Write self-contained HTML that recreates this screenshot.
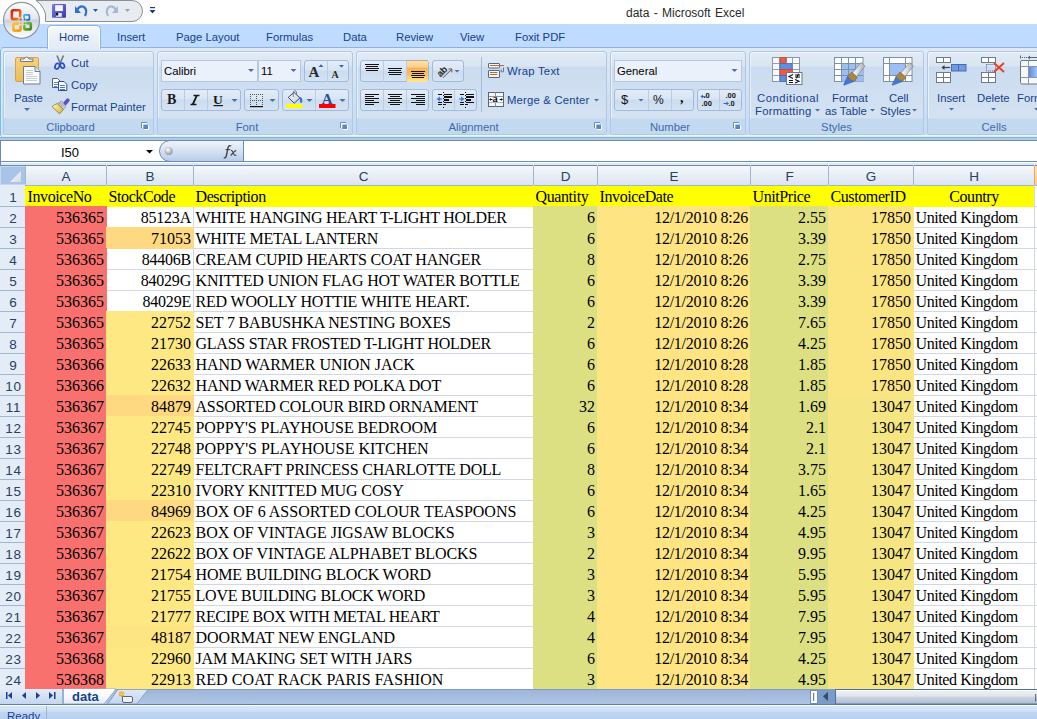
<!DOCTYPE html>
<html><head><meta charset="utf-8">
<style>
*{box-sizing:border-box;margin:0;padding:0}
html,body{width:1037px;height:719px;overflow:hidden;background:#fff;font-family:"Liberation Sans",sans-serif;position:relative}
.a{position:absolute}
/* title */
#title{left:0;top:0;width:1037px;height:24px;background:#fff}
#ttext{left:626px;top:6px;font-size:12px;color:#2a2a2a;white-space:nowrap;word-spacing:1px}
#tabs{left:0;top:24px;width:1037px;height:24px;background:#bfdbff}
.tab{position:absolute;z-index:3;top:31px;font-size:11.3px;color:#15428b;white-space:nowrap}
#hometab{left:47px;top:25px;width:54px;height:24px;border:1px solid #8db2e3;border-bottom:none;border-radius:5px 5px 0 0;background:linear-gradient(#f7fafd,#e9f0f9 50%,#e1eaf6);z-index:2;box-shadow:inset 1px 1px 0 #fff,inset -1px 0 0 #fff}
/* ribbon */
#ribbon{left:0;top:47px;width:1037px;height:90px;background:linear-gradient(#dfe9f5,#c4daf3);border-top:1px solid #8db2e3;border-left:1px solid #8db0e0;border-radius:4px 0 0 3px;box-shadow:inset 1px -1px 0 #bff6fb,inset 0 -2px 0 #e8f6fa}
.grp{position:absolute;top:51px;height:84px;border:1px solid #afc8e6;border-radius:3px;background:linear-gradient(#e2ebf6 0px,#d9e5f3 14px,#cbdcf0 15px,#d4e2f2 66px);overflow:hidden;box-shadow:inset 1px 1px 0 rgba(255,255,255,.5)}
.glab{position:absolute;left:0;right:0;bottom:0;height:16px;background:#c2d9f0;border-top:1px solid #c9dcf2;font-size:11.3px;color:#3e6aaa;text-align:center;line-height:17px;white-space:nowrap;padding-right:16px}
.glab.nl{padding-right:0}
.lt{position:absolute;font-size:11.3px;color:#15428b;white-space:nowrap;line-height:14px}
.btng{position:absolute;height:21px;border:1px solid #9fbbdd;border-radius:3px;background:linear-gradient(#e3ecf7 0%,#d9e5f4 45%,#cbdcf0 50%,#d5e3f3 100%)}
.sep{position:absolute;top:0;bottom:0;width:1px;background:#b9cde5}
.combo{position:absolute;height:22px;border:1px solid #b4c8e1;background:#eaf1fa}
.dd{position:absolute;width:0;height:0;border-left:3px solid transparent;border-right:3px solid transparent;border-top:3px solid #4c6ea0}
.launch{position:absolute;width:7px;height:7px;border:1px solid #6b8fbf;border-radius:1px}
/* formula bar */
#fbar{left:0;top:137px;width:1037px;height:29px;background:linear-gradient(#b4c9e8 0,#b4c9e8 2px,#ffffff 2px,#ffffff 25px,#dde8f5 25px);border-top:1px solid #98aac4}
#namebox{left:0;top:140px;width:243px;height:22px;background:#fff;border:1px solid #6a8cb3;border-right:none}
#fxbtn{left:159px;top:140px;width:85px;height:22px;border:1px solid #6a8cb3;border-radius:11px 0 0 11px;background:linear-gradient(#eef3fa,#d5e2f3 50%,#b9cde9)}
#finput{left:243px;top:140px;width:794px;height:22px;background:#fff;border-top:1px solid #6a8cb3;border-bottom:1px solid #6a8cb3;border-left:1px solid #6a8cb3}
/* grid */
#grid{left:0;top:165px;width:1037px;height:524px;background:#fff;overflow:hidden}
.gh{position:absolute;left:0;width:1037px;height:1px;background:#d0d7e5}
.gv{position:absolute;top:165px;width:1px;height:524px;background:#d0d7e5}
.cf{position:absolute}
.ct{position:absolute;font-family:"Liberation Serif",serif;font-size:16px;line-height:21px;height:21px;color:#000;white-space:nowrap;letter-spacing:-0.22px}
.ct.n{letter-spacing:0}
.ct.dt{letter-spacing:-0.25px}
.ct.lc{letter-spacing:-0.4px}
.ct.c{text-align:center}
.rh{position:absolute;left:0;width:25px;height:21px;background:#e4ecf7;border-bottom:1px solid #9eb6ce;font-size:13.5px;color:#27415f;text-align:center;line-height:23px;padding-left:2px;letter-spacing:0.8px}
.ch{position:absolute;top:166px;height:19px;background:linear-gradient(#f6f9fc,#e8eef6 50%,#dde5ef);border-right:1px solid #9eb6ce;font-size:13.5px;color:#27415f;text-align:center;line-height:21px}
#colhdr{left:0;top:165px;width:1037px;height:21px;background:linear-gradient(#f6f9fc,#e8eef6 50%,#dde5ef);border-top:1px solid #6a8cb3;border-bottom:1px solid #9eb6ce}
#rowhdr{left:0;top:185px;width:26px;height:504px;background:#e4ecf7;border-right:1px solid #9eb6ce}
#selall{left:0;top:166px;width:26px;height:19px;background:#a9c4e8;border:1px solid #c6d8f0;border-right:1px solid #9eb6ce}
/* bottom */
#tabbar{left:0;top:689px;width:1037px;height:15px;background:linear-gradient(#c5d6ec,#a7c0e0)}
#status{left:0;top:704px;width:1037px;height:15px;background:linear-gradient(#dfe9f6,#c6d8f0);border-top:1px solid #9ab3d6}
</style></head><body>
<div id="title" class="a"></div>

<div id="ttext" class="a">data - Microsoft Excel</div>
<div id="tabs" class="a"></div>
<div id="hometab" class="a"></div>
<div class="tab" style="left:59px">Home</div>
<div class="tab" style="left:117px">Insert</div>
<div class="tab" style="left:176px">Page Layout</div>
<div class="tab" style="left:266px">Formulas</div>
<div class="tab" style="left:343px">Data</div>
<div class="tab" style="left:396px">Review</div>
<div class="tab" style="left:460px">View</div>
<div class="tab" style="left:515px">Foxit PDF</div>

<svg class="a" style="left:0;top:0" width="180" height="44" viewBox="0 0 180 44">
<defs>
<linearGradient id="ob" x1="0" y1="0" x2="0" y2="1"><stop offset="0" stop-color="#fdfdfe"/><stop offset="0.45" stop-color="#e3e8ef"/><stop offset="0.5" stop-color="#c9d2de"/><stop offset="0.75" stop-color="#e6ebf1"/><stop offset="1" stop-color="#ffffff"/></linearGradient>
</defs>
<path d="M36,0.5 H132 A10.5,10.5 0 0 1 132,21.5 H45.5 V14 Q43,5 36,0.5 Z" fill="#e7ecf3" stroke="#8c8f94" stroke-width="1"/>
<circle cx="21.5" cy="20.3" r="18" fill="url(#ob)" stroke="#8d98a6" stroke-width="1.2"/>
<defs>
<linearGradient id="lr" x1="0" y1="0" x2="1" y2="1"><stop offset="0" stop-color="#c9200a"/><stop offset="1" stop-color="#f88a1c"/></linearGradient>
<linearGradient id="lb" x1="0" y1="0" x2="1" y2="1"><stop offset="0" stop-color="#49b6f2"/><stop offset="1" stop-color="#1766c8"/></linearGradient>
<linearGradient id="ly" x1="0" y1="0" x2="1" y2="1"><stop offset="0" stop-color="#ffc230"/><stop offset="1" stop-color="#f59a10"/></linearGradient>
<linearGradient id="lg" x1="0" y1="0" x2="1" y2="1"><stop offset="0" stop-color="#8cc83c"/><stop offset="1" stop-color="#3a8a1e"/></linearGradient>
</defs>
<g fill="none" stroke-linejoin="round" stroke-linecap="round">
<path d="M20.2,16.5 V11.5 Q20.2,10.2 18.9,10.2 H13.2 Q11.9,10.2 11.9,11.5 V17.8 Q11.9,19.1 13.2,19.1 H17.5" stroke="url(#lr)" stroke-width="2.6"/>
<path d="M24,17.2 V15.4 Q24,14.8 24.6,14.8 H28.8 Q29.4,14.8 29.4,15.4 V19.2 Q29.4,19.8 28.8,19.8 H26.8" stroke="url(#lb)" stroke-width="1.7"/>
<path d="M17.5,23.6 H14.6 Q13.3,23.6 13.3,24.9 V29.3 Q13.3,30.6 14.6,30.6 H19.2 Q20.5,30.6 20.5,29.3 V26.5" stroke="url(#ly)" stroke-width="2.6"/>
<path d="M27,23.1 H29.5 Q30.8,23.1 30.8,24.4 V28.1 Q30.8,29.4 29.5,29.4 H25.6 Q24.3,29.4 24.3,28.1 V26" stroke="url(#lg)" stroke-width="2.6"/>
</g>
<circle cx="20.7" cy="19.4" r="1.2" fill="#ea5a14"/><circle cx="24.6" cy="19.4" r="1.1" fill="#1f78d8"/>
<circle cx="20.7" cy="23.3" r="1.1" fill="#f7b030"/><circle cx="24.6" cy="23.3" r="1.1" fill="#6ab42e"/>
<!-- save -->
<defs><linearGradient id="sv" x1="0" y1="0" x2="1" y2="1"><stop offset="0" stop-color="#7f7fe6"/><stop offset="1" stop-color="#3a38a8"/></linearGradient></defs>
<rect x="52" y="4" width="14" height="13.8" rx="1" fill="url(#sv)"/>
<rect x="54.8" y="4.8" width="8.4" height="6.6" fill="#f4f6fb" stroke="#3d3bb0" stroke-width="0.6"/>
<rect x="56" y="13" width="5.8" height="3.8" fill="#e8e8f0"/><rect x="56" y="13" width="2.2" height="2.5" fill="#111"/>
<!-- undo -->
<path d="M77,10 Q80,5 84,7 Q88,10 85,16" fill="none" stroke="#2f6fd6" stroke-width="2.2"/>
<path d="M75,6 L75,13 L81,13 Z" fill="#2f6fd6"/>
<path d="M93,9 h5 l-2.5,3 z" fill="#2a57a8"/>
<!-- redo -->
<path d="M116,10 Q113,5 109,7 Q105,10 108,16" fill="none" stroke="#a9b9d2" stroke-width="2.2"/>
<path d="M118,6 L118,13 L112,13 Z" fill="#a9b9d2"/>
<path d="M125,9 h5 l-2.5,3 z" fill="#a0a0a0"/>
<!-- customize -->
<rect x="150" y="7" width="5" height="1.2" fill="#1a3a86"/>
<path d="M149.5,10 h6 l-3,3.5 z" fill="#1a3a86"/>
</svg>
<div id="ribbon" class="a"></div>
<div class="grp" style="left:3px;width:151px"><div class="glab">Clipboard</div></div>
<div class="grp" style="left:157px;width:196px"><div class="glab">Font</div></div>
<div class="grp" style="left:356px;width:251px"><div class="glab">Alignment</div></div>
<div class="grp" style="left:610px;width:136px"><div class="glab">Number</div></div>
<div class="grp" style="left:749px;width:175px"><div class="glab nl">Styles</div></div>
<div class="grp" style="left:927px;width:134px"><div class="glab nl">Cells</div></div>

<!-- clipboard contents -->
<div class="lt" style="left:14px;top:91px">Paste</div>
<div class="lt" style="left:71px;top:56px">Cut</div>
<div class="lt" style="left:71px;top:78px">Copy</div>
<div class="lt" style="left:71px;top:100px">Format Painter</div>

<!-- font group -->
<div class="combo" style="left:161px;top:60px;width:97px"></div>
<div class="lt" style="left:164px;top:64px;color:#000">Calibri</div>
<div class="combo" style="left:258px;top:60px;width:43px"></div>
<div class="lt" style="left:261px;top:64px;color:#000">11</div>
<div class="btng" style="left:304px;top:60px;width:45px;height:22px"></div>
<div class="btng" style="left:161px;top:89px;width:80px;height:22px"></div>
<div class="btng" style="left:244px;top:89px;width:35px;height:22px"></div>
<div class="btng" style="left:282px;top:89px;width:67px;height:22px"></div>

<!-- alignment -->
<div class="btng" style="left:360px;top:60px;width:69px;height:22px"></div>
<div class="btng" style="left:432px;top:60px;width:32px;height:22px"></div>
<div class="btng" style="left:360px;top:89px;width:69px;height:22px"></div>
<div class="btng" style="left:432px;top:89px;width:45px;height:22px"></div>
<div class="lt" style="left:507px;top:64px;letter-spacing:0.25px">Wrap Text</div>
<div class="lt" style="left:507px;top:93px;letter-spacing:0.2px">Merge &amp; Center</div>

<!-- number -->
<div class="combo" style="left:614px;top:60px;width:128px"></div>
<div class="lt" style="left:617px;top:64px;color:#000">General</div>
<div class="btng" style="left:614px;top:89px;width:80px;height:22px"></div>
<div class="btng" style="left:697px;top:89px;width:45px;height:22px"></div>

<!-- styles -->
<div class="lt" style="left:757px;top:91px;letter-spacing:0.5px">Conditional</div>
<div class="lt" style="left:755px;top:104px;letter-spacing:0.25px">Formatting</div>
<div class="lt" style="left:832px;top:91px">Format</div>
<div class="lt" style="left:825px;top:104px">as Table</div>
<div class="lt" style="left:889px;top:91px">Cell</div>
<div class="lt" style="left:880px;top:104px">Styles</div>

<!-- cells -->
<div class="lt" style="left:937px;top:91px">Insert</div>
<div class="lt" style="left:977px;top:91px">Delete</div>
<div class="lt" style="left:1017px;top:91px">Format</div>

<svg class="a" style="left:0;top:0" width="1037" height="140" viewBox="0 0 1037 140">
<defs>
<linearGradient id="clipb" x1="0" y1="0" x2="0" y2="1"><stop offset="0" stop-color="#f8d27f"/><stop offset="1" stop-color="#eebb55"/></linearGradient>
<linearGradient id="hl" x1="0" y1="0" x2="0" y2="1"><stop offset="0" stop-color="#fbe0b4"/><stop offset="0.3" stop-color="#fcd08e"/><stop offset="0.36" stop-color="#fdb24c"/><stop offset="0.6" stop-color="#fdbb5a"/><stop offset="1" stop-color="#ffe894"/></linearGradient>
<linearGradient id="brush" x1="0" y1="0" x2="1" y2="1"><stop offset="0" stop-color="#f3e38a"/><stop offset="1" stop-color="#b8a040"/></linearGradient>
</defs>
<!-- separators -->
<g fill="#b8cce6">
<rect x="184" y="90" width="1" height="20"/><rect x="207" y="90" width="1" height="20"/>
<rect x="327" y="61" width="1" height="21"/>
<rect x="315" y="90" width="1" height="20"/>
<rect x="383" y="61" width="1" height="21"/><rect x="406" y="61" width="1" height="21"/>
<rect x="383" y="90" width="1" height="20"/><rect x="406" y="90" width="1" height="20"/>
<rect x="454" y="90" width="1" height="20"/>
<rect x="648" y="90" width="1" height="20"/><rect x="671" y="90" width="1" height="20"/>
<rect x="719" y="90" width="1" height="20"/>
</g>
<!-- Paste -->
<rect x="15.5" y="57.5" width="23" height="24" rx="1.5" fill="url(#clipb)" stroke="#d4a24c"/>
<path d="M20.5,61.5 V59 H24 Q26.5,55 29,59 H33 V61.5 Z" fill="#f2f4f7" stroke="#6f7b8a"/>
<path d="M23.5,66.5 H35 L40,71.5 V84 H23.5 Z" fill="#fdfdfe" stroke="#6b7c93"/>
<path d="M35,66.5 V71.5 H40" fill="#dfe6ef" stroke="#6b7c93"/>
<g stroke="#c5ccd6" stroke-width="1"><path d="M26,70.5h7M26,72.5h7M26,74.5h7M26,76.5h11M26,78.5h11M26,80.5h11"/></g>
<path d="M24,108 h6 l-3,3 z" fill="#4e72a8"/>
<!-- Cut -->
<path d="M57,55.5 L60.3,63.5 M63.5,55.5 L60,63.5" stroke="#6f7682" stroke-width="1.6" fill="none"/>
<ellipse cx="57.2" cy="66.2" rx="2.1" ry="2.9" transform="rotate(25 57.2 66.2)" fill="none" stroke="#2b52c4" stroke-width="1.7"/>
<ellipse cx="62.4" cy="65.6" rx="1.9" ry="2.6" transform="rotate(-25 62.4 65.6)" fill="none" stroke="#2b52c4" stroke-width="1.7"/>
<!-- Copy -->
<path d="M52.5,78.5 H57.5 L60.5,81.5 V87.5 H52.5 Z" fill="#fbfcfe" stroke="#55607a"/>
<g stroke="#5b8ad8"><path d="M54,82.5h4M54,84.5h4M54,86.5h3"/></g>
<path d="M58.5,81.5 H64 L66.8,84.3 V90.5 H58.5 Z" fill="#fbfcfe" stroke="#2a4da0"/>
<g stroke="#4a78d0"><path d="M60,85.5h5M60,87.5h5M60,89.5h5"/></g>
<!-- Format painter -->
<defs><linearGradient id="brs" x1="0" y1="0" x2="1" y2="1"><stop offset="0" stop-color="#fff7b0"/><stop offset="1" stop-color="#d4b340"/></linearGradient></defs>
<path d="M64.5,104 L67.8,100.2" stroke="#5552c4" stroke-width="3.6" stroke-linecap="round"/>
<path d="M57.3,103.6 L61.8,101 L65.8,106.2 L63.3,109.6 Z" fill="#c9ccd6" stroke="#7a7e8a" stroke-width="0.6"/>
<path d="M59,103 l1.2,1.6M61,104.8 l1.2,1.6M60.5,102.5 l1.2,1.6M62.5,104.3 l1.2,1.6" stroke="#8a8e9a" stroke-width="0.7"/>
<path d="M52,106.6 Q54,104.5 57.3,103.6 L63.3,109.6 L59.6,113.9 Z" fill="url(#brs)" stroke="#7a6a28" stroke-width="0.7"/>
<!-- Font combos arrows -->
<path d="M248,69 h6 l-3,3 z" fill="#4a6fa5"/>
<path d="M290.5,69 h6 l-3,3 z" fill="#4a6fa5"/>
<!-- Grow/shrink font -->
<text x="308.5" y="77" font-family="Liberation Serif" font-weight="bold" font-size="15" fill="#2b2b2b">A</text>
<path d="M318.5,67 h5 l-2.5,-2.8 z" fill="#3c66b0"/>
<text x="331.5" y="77.5" font-family="Liberation Serif" font-weight="bold" font-size="10" fill="#2b2b2b">A</text>
<path d="M339,65 h5 l-2.5,2.8 z" fill="#3c66b0"/>
<!-- B I U -->
<text x="167" y="104" font-family="Liberation Serif" font-weight="bold" font-size="14" fill="#1a1a1a">B</text>
<path d="M193.5,95.5 H199.5 M190.5,104.5 H196.5 M197,95.5 L193,104.5" stroke="#1a1a1a" stroke-width="1.3" fill="none"/>
<path d="M196.6,95.8 L192.6,104.2" stroke="#1a1a1a" stroke-width="1.5"/>
<text x="213" y="103.6" font-family="Liberation Serif" font-weight="bold" font-size="13.5" fill="#1a1a1a">U</text>
<rect x="213.5" y="105" width="9.5" height="1.2" fill="#1a1a1a"/>
<path d="M231.5,99 h6 l-3,3 z" fill="#4a6fa5"/>
<!-- borders -->
<g fill="#555"><path d="M250,94h1v1h-1zM252,94h1v1h-1zM254,94h1v1h-1zM256,94h1v1h-1zM258,94h1v1h-1zM260,94h1v1h-1zM262,94h1v1h-1z
M250,100h1v1h-1zM252,100h1v1h-1zM254,100h1v1h-1zM256,100h1v1h-1zM258,100h1v1h-1zM260,100h1v1h-1zM262,100h1v1h-1z
M250,96h1v1h-1zM250,98h1v1h-1zM250,102h1v1h-1zM250,104h1v1h-1zM256,96h1v1h-1zM256,98h1v1h-1zM256,102h1v1h-1zM256,104h1v1h-1zM262,96h1v1h-1zM262,98h1v1h-1zM262,102h1v1h-1zM262,104h1v1h-1z"/></g>
<rect x="250" y="106" width="13" height="1.2" fill="#111"/>
<path d="M269.5,99 h6 l-3,3 z" fill="#4a6fa5"/>
<!-- fill color -->
<defs><linearGradient id="bkt" x1="0" y1="0" x2="1" y2="1"><stop offset="0" stop-color="#ffffff"/><stop offset="1" stop-color="#b8c8e0"/></linearGradient></defs>
<path d="M288.3,97.3 L294,92.3 L300,98 L294.2,103.3 Z" fill="url(#bkt)" stroke="#2e3a58" stroke-width="0.9"/>
<path d="M293.2,97 V93 Q293.2,90.8 295,90.8 Q296.6,90.8 296.6,93 V94.5" fill="none" stroke="#6b7280" stroke-width="0.9"/>
<path d="M299.2,96.8 Q302.8,97.3 302.3,101.5 Q302,103.3 300.6,103.3 Q299.6,101 300,99.3 Z" fill="#3a6fd0"/>
<rect x="286" y="104" width="16.5" height="4" fill="#ffff00"/>
<path d="M306.5,99 h6 l-3,3 z" fill="#4a6fa5"/>
<!-- font color -->
<text x="321.8" y="103.5" font-family="Liberation Serif" font-weight="bold" font-size="15" fill="#2a4f9e">A</text>
<rect x="319" y="104" width="16.5" height="4" fill="#ff0000"/>
<path d="M339.5,99 h6 l-3,3 z" fill="#4a6fa5"/>
<!-- align top/mid/bottom -->
<g stroke="#111" stroke-width="1"><path d="M365,64.5h14M366,66.5h12M365,68.5h14M366,70.5h12"/></g>
<rect x="407" y="60.5" width="21" height="21.5" fill="url(#hl)" />
<rect x="407" y="60" width="21" height="1" fill="#c2a67e"/>
<g stroke="#111" stroke-width="1"><path d="M388,68.5h14M389,70.5h12M388,72.5h14M389,74.5h12"/></g>
<g stroke="#111" stroke-width="1"><path d="M411,71.5h14M412,73.5h12M411,75.5h14M412,77.5h12"/></g>
<!-- orientation -->
<g transform="rotate(-45 442.5 70.5)"><text x="436" y="74" font-family="Liberation Sans" font-weight="bold" font-size="9.5" fill="#2a2a2a" style="letter-spacing:-0.3px">ab</text></g>
<path d="M443,77.8 L451.5,69.3" stroke="#6a5048" stroke-width="1"/>
<path d="M448.5,69 h3.3 v3.3" fill="none" stroke="#6a5048" stroke-width="1"/>
<path d="M454.5,70 h5 l-2.5,2.5 z" fill="#4a6fa5"/>
<!-- align left/center/right -->
<g stroke="#111" stroke-width="1">
<path d="M365,94.5h14M365,96.5h9M365,98.5h14M365,100.5h9M365,102.5h14M365,104.5h9"/>
<path d="M388,94.5h14M390,96.5h10M388,98.5h14M390,100.5h10M388,102.5h14M390,104.5h10"/>
<path d="M411,94.5h14M416,96.5h9M411,98.5h14M416,100.5h9M411,102.5h14M416,104.5h9"/>
</g>
<!-- indent -->
<g stroke="#111" stroke-width="1">
<path d="M438,94.5h4M444,94.5h8M438,102.5h4M444,102.5h8M438,104.5h4M444,104.5h2"/>
</g>
<rect x="444" y="96" width="8" height="2" fill="#111"/><rect x="444" y="99" width="5" height="2" fill="#111"/>
<path d="M443.5,92v16" stroke="#111" stroke-width="1" stroke-dasharray="1 2"/>
<path d="M436.5,99 L440,96.5 V101.5 Z" fill="#3e78d8"/><path d="M439,99h3" stroke="#3e78d8" stroke-width="1.2"/>
<g stroke="#111" stroke-width="1">
<path d="M460,94.5h4M466,94.5h8M460,102.5h4M466,102.5h8M460,104.5h4M466,104.5h2"/>
</g>
<rect x="466" y="96" width="8" height="2" fill="#111"/><rect x="466" y="99" width="5" height="2" fill="#111"/>
<path d="M465.5,92v16" stroke="#111" stroke-width="1" stroke-dasharray="1 2"/>
<path d="M464.5,99 L461,96.5 V101.5 Z" fill="#3e78d8"/><path d="M459,99h3" stroke="#3e78d8" stroke-width="1.2"/>
<!-- alignment separator -->
<rect x="481" y="57" width="1" height="55" fill="#a5bcd9"/>
<!-- wrap text -->
<rect x="488.5" y="63.5" width="11" height="4.5" rx="0.5" fill="#f4f6f9" stroke="#58667a"/>
<rect x="488.5" y="70.5" width="11" height="7" rx="0.5" fill="#f4f6f9" stroke="#58667a"/>
<path d="M490,65.5h14M490,72.5h7.5M490,74.5h7.5" stroke="#b4702a" stroke-width="1"/>
<path d="M503.5,67.5 V71.5 M501.2,69.5 V71.8 H503.5" fill="none" stroke="#5a6a88" stroke-width="0.9"/>
<!-- merge -->
<rect x="488.5" y="92.5" width="15" height="14" fill="#f4f6f9" stroke="#58667a"/>
<path d="M489,96.5h14M489,102.5h14M495.5,92.5v4M495.5,102.5v4" stroke="#8a96a8" stroke-width="1"/>
<rect x="489" y="97" width="14" height="5.3" fill="#ffffff"/>
<text x="492.6" y="102.3" font-family="Liberation Serif" font-weight="bold" font-size="10.5" fill="#111">a</text>
<path d="M489.5,99.5h3M499.5,99.5h3" stroke="#111"/>
<path d="M489.3,99.5 l1.6,-1.5 v3 z M502.7,99.5 l-1.6,-1.5 v3 z" fill="#111"/>
<path d="M594,99 h5 l-2.5,2.5 z" fill="#4a6fa5"/>
<!-- number -->
<path d="M731.5,69 h6 l-3,3 z" fill="#4a6fa5"/>
<text x="621" y="104" font-family="Liberation Sans" font-size="13" fill="#111">$</text>
<path d="M638.5,99 h5 l-2.5,2.5 z" fill="#4a6fa5"/>
<text x="653" y="104" font-family="Liberation Sans" font-size="12" fill="#111">%</text>
<text x="680" y="102" font-family="Liberation Serif" font-weight="bold" font-size="14" fill="#111">,</text>
<text x="703.5" y="98" font-family="Liberation Sans" font-weight="bold" font-size="7.5" fill="#111">.0</text>
<text x="701.5" y="105.5" font-family="Liberation Sans" font-weight="bold" font-size="7.5" fill="#111">.00</text>
<path d="M701,96.5h4.5" stroke="#2f67cf" stroke-width="1"/><path d="M700.5,96.5 l2.5,-2 v4 z" fill="#2f67cf"/>
<text x="725.5" y="98" font-family="Liberation Sans" font-weight="bold" font-size="7.5" fill="#111">.00</text>
<text x="728.5" y="105.5" font-family="Liberation Sans" font-weight="bold" font-size="7.5" fill="#111">.0</text>
<path d="M723.5,103.5h4.5" stroke="#2f67cf" stroke-width="1"/><path d="M729,103.5 l-2.5,-2 v4 z" fill="#2f67cf"/>
<!-- conditional formatting -->
<g>
<rect x="772.5" y="57.5" width="27" height="24" fill="#f7f9fc" stroke="#8c96a4"/>
<path d="M772.5,63.5h27M772.5,69.5h27M772.5,75.5h27M779.5,57.5v24M786.5,57.5v24M792.5,57.5v24" stroke="#8fa0b8" stroke-width="1"/>
<rect x="780" y="57.5" width="6" height="6" fill="#ee5a46" stroke="#c8401f" stroke-width="0.6"/>
<rect x="780" y="63.5" width="12" height="6" fill="#5d8fe2" stroke="#3a62b8" stroke-width="0.6"/>
<rect x="780" y="69.5" width="12.5" height="6" fill="#ee5a46" stroke="#c8401f" stroke-width="0.6"/>
<rect x="780" y="75.5" width="6" height="6" fill="#5d8fe2" stroke="#3a62b8" stroke-width="0.6"/>
<rect x="786.5" y="72.5" width="15.5" height="12" fill="#f7f9fc" stroke="#6f7a88"/>
<path d="M793,74.5 L789,76.5 L793,78.5 M789,80.5h4M789,82.5h4 M795,79.5 L799,81.3 L795,83 M795,75h5M795,77h5M798.5,73.8 L796.5,78.2" stroke="#111" stroke-width="1.1" fill="none"/>
</g>
<path d="M815,109 h5 l-2.5,2.5 z" fill="#4a6fa5"/>
<!-- format as table -->
<defs><linearGradient id="hand" x1="0" y1="0" x2="1" y2="0"><stop offset="0" stop-color="#ffffff"/><stop offset="1" stop-color="#a9b0b8"/></linearGradient></defs>
<rect x="834.5" y="57.5" width="28.5" height="24" fill="#ffffff" stroke="#7c8fab"/>
<rect x="841" y="63" width="22" height="18.5" fill="#9dbef5"/>
<path d="M834.5,63.5h28.5M834.5,69.5h28.5M834.5,75.5h28.5M841.5,57.5v24M848.5,57.5v24M855.5,57.5v24" stroke="#7c8fab" stroke-width="1"/>
<path d="M861,62.5 L865,66 L856.5,76.5 L852.5,73 Z" fill="url(#hand)" stroke="#7d8590" stroke-width="0.7"/>
<path d="M851.5,72 L857.5,77.5 L854,81.5 Q850,81 847.5,76.5 Z" fill="#a9873f" stroke="#7a5f2a" stroke-width="0.5"/>
<path d="M847.5,76.5 Q850,81 854,81.5 L844,85.3 L843.6,84.8 Z" fill="#3f78d8" stroke="#2d5cb0" stroke-width="0.5"/>
<path d="M870,109 h5 l-2.5,2.5 z" fill="#4a6fa5"/>
<!-- cell styles -->
<rect x="883.5" y="57.5" width="28.5" height="24" fill="#ffffff" stroke="#7c8fab"/>
<path d="M883.5,63.5h28.5M883.5,75.5h28.5M889.5,57.5v24M905.5,57.5v24" stroke="#7c8fab" stroke-width="1"/>
<rect x="890" y="64" width="15" height="11" fill="#9dbef5"/>
<path d="M909.5,62.5 L913.5,66 L905.0,76.5 L901.0,73 Z" fill="url(#hand)" stroke="#7d8590" stroke-width="0.7"/>
<path d="M900.0,72 L906.0,77.5 L902.5,81.5 Q898.5,81 896.0,76.5 Z" fill="#a9873f" stroke="#7a5f2a" stroke-width="0.5"/>
<path d="M896.0,76.5 Q898.5,81 902.5,81.5 L892.5,85.3 L892.1,84.8 Z" fill="#3f78d8" stroke="#2d5cb0" stroke-width="0.5"/>
<path d="M912,109 h5 l-2.5,2.5 z" fill="#4a6fa5"/>
<!-- insert -->
<rect x="936.5" y="57.5" width="14" height="5" fill="#fff" stroke="#6f7a88"/><path d="M943.5,57.5v5" stroke="#6f7a88"/>
<rect x="951.5" y="64.5" width="14.5" height="6.5" fill="#6f9ae6" stroke="#4a6aa8"/><path d="M958.5,64.5v6.5" stroke="#4a6aa8"/>
<path d="M942,67.5h8" stroke="#3a3f48" stroke-width="1.2"/><path d="M941.5,67.5 l3,-2.5 v5 z" fill="#3a3f48"/>
<rect x="936.5" y="72.5" width="14" height="10" fill="#fff" stroke="#6f7a88"/><path d="M936.5,77.5h14M943.5,72.5v10" stroke="#6f7a88"/>
<path d="M949,108 h5 l-2.5,2.5 z" fill="#4a6fa5"/>
<!-- delete -->
<rect x="981.5" y="57.5" width="14" height="5" fill="#fff" stroke="#6f7a88"/><path d="M988.5,57.5v5" stroke="#6f7a88"/>
<rect x="986.5" y="64.5" width="9" height="6.5" fill="none" stroke="#4a6aa8" stroke-dasharray="1 1"/>
<rect x="981.5" y="72.5" width="14" height="10" fill="#fff" stroke="#6f7a88"/><path d="M981.5,77.5h14M988.5,72.5v10" stroke="#6f7a88"/>
<path d="M994,63 L1004,72 M1004,63 L994,72" stroke="#ec3a1e" stroke-width="1.8"/>
<path d="M991,108 h5 l-2.5,2.5 z" fill="#4a6fa5"/>
<!-- format -->
<defs><linearGradient id="fmtb" x1="0" y1="0" x2="1" y2="0"><stop offset="0" stop-color="#5a8be0"/><stop offset="1" stop-color="#a9c4f2"/></linearGradient></defs>
<path d="M1020.5,55.5 v3" stroke="#58667a"/>
<path d="M1022,57.5 h5" stroke="#58667a" stroke-dasharray="1 1"/>
<path d="M1028,57.5 h9" stroke="#58667a"/><path d="M1027.5,57.5 l2.5,-2 v4 z" fill="#58667a"/>
<rect x="1020.5" y="60.5" width="20" height="23.5" rx="1.5" fill="#f7f8fa" stroke="#6a7686"/>
<path d="M1020.5,66.5h17M1020.5,77.5h17M1028.5,60.5v23.5" stroke="#8a94a2"/>
<rect x="1029" y="67" width="8" height="10" fill="url(#fmtb)"/>
<path d="M1034,108 h5 l-2.5,2.5 z" fill="#4a6fa5"/>
<!-- dialog launchers -->
<path d="M141.5,128 V122.5 H147" fill="none" stroke="#6a8fc0"/>
<path d="M142.5,128 V123.5 H147" fill="none" stroke="#ffffff"/>
<rect x="143.5" y="124.8" width="4.5" height="4.2" fill="#5f86bb"/>
<path d="M148.5,125 V129.5 H144" fill="none" stroke="#ffffff"/>
<path d="M340.5,128 V122.5 H346" fill="none" stroke="#6a8fc0"/>
<path d="M341.5,128 V123.5 H346" fill="none" stroke="#ffffff"/>
<rect x="342.5" y="124.8" width="4.5" height="4.2" fill="#5f86bb"/>
<path d="M347.5,125 V129.5 H343" fill="none" stroke="#ffffff"/>
<path d="M594.5,128 V122.5 H600" fill="none" stroke="#6a8fc0"/>
<path d="M595.5,128 V123.5 H600" fill="none" stroke="#ffffff"/>
<rect x="596.5" y="124.8" width="4.5" height="4.2" fill="#5f86bb"/>
<path d="M601.5,125 V129.5 H597" fill="none" stroke="#ffffff"/>
<path d="M733.5,128 V122.5 H739" fill="none" stroke="#6a8fc0"/>
<path d="M734.5,128 V123.5 H739" fill="none" stroke="#ffffff"/>
<rect x="735.5" y="124.8" width="4.5" height="4.2" fill="#5f86bb"/>
<path d="M740.5,125 V129.5 H736" fill="none" stroke="#ffffff"/>
</svg>

<!-- formula bar -->
<div id="fbar" class="a"></div>
<div id="namebox" class="a"></div>
<div class="a" style="left:0;top:140px;width:1px;height:26px;background:#6a8cb3"></div>
<div class="a" style="left:61px;top:145px;font-size:13px;color:#000">I50</div>
<svg class="a" style="left:140px;top:140px" width="110" height="24" viewBox="140 140 110 24">
<path d="M146,150 h7 l-3.5,3.5 z" fill="#000"/>
</svg>
<div id="fxbtn" class="a"></div>
<div id="finput" class="a"></div>
<svg class="a" style="left:159px;top:140px" width="90" height="24" viewBox="159 140 90 24">
<defs><radialGradient id="gball" cx="0.4" cy="0.35" r="0.7"><stop offset="0" stop-color="#ffffff"/><stop offset="1" stop-color="#8c8f96"/></radialGradient></defs>
<circle cx="168.7" cy="151" r="4" fill="url(#gball)"/>
<path d="M231.2,146 C229.6,145 228.3,146 227.9,148.2 L226.3,156 C225.9,157.8 224.8,158.2 223.8,157.6" stroke="#454545" stroke-width="1.4" fill="none"/>
<path d="M225.6,149.6 H230.2" stroke="#454545" stroke-width="1.1"/>
<path d="M230.8,150.2 C232.5,150 233,152 233.6,153.6 C234.2,155.3 235,155.6 236.4,155 M236.2,150.4 C235,150.6 232,154 230.6,155.6" stroke="#454545" stroke-width="1.1" fill="none"/>
</svg>

<!-- grid -->
<div id="colhdr" class="a"></div>
<div id="selall" class="a"></div>
<svg class="a" style="left:0;top:166px" width="26" height="20" viewBox="0 166 26 20"><defs><linearGradient id="tri" x1="0" y1="0" x2="1" y2="1"><stop offset="0" stop-color="#ffffff"/><stop offset="1" stop-color="#d2d8e0"/></linearGradient></defs><path d="M21,171 V182 H10 Z" fill="url(#tri)"/></svg>
<div id="rowhdr" class="a"></div>
<div class="gh" style="top:206px"></div>
<div class="gh" style="top:227px"></div>
<div class="gh" style="top:248px"></div>
<div class="gh" style="top:269px"></div>
<div class="gh" style="top:290px"></div>
<div class="gh" style="top:311px"></div>
<div class="gh" style="top:332px"></div>
<div class="gh" style="top:353px"></div>
<div class="gh" style="top:374px"></div>
<div class="gh" style="top:395px"></div>
<div class="gh" style="top:416px"></div>
<div class="gh" style="top:437px"></div>
<div class="gh" style="top:458px"></div>
<div class="gh" style="top:479px"></div>
<div class="gh" style="top:500px"></div>
<div class="gh" style="top:521px"></div>
<div class="gh" style="top:542px"></div>
<div class="gh" style="top:563px"></div>
<div class="gh" style="top:584px"></div>
<div class="gh" style="top:605px"></div>
<div class="gh" style="top:626px"></div>
<div class="gh" style="top:647px"></div>
<div class="gh" style="top:668px"></div>
<div class="gh" style="top:689px"></div>
<div class="gv" style="left:106px"></div>
<div class="gv" style="left:193px"></div>
<div class="gv" style="left:533px"></div>
<div class="gv" style="left:597px"></div>
<div class="gv" style="left:750px"></div>
<div class="gv" style="left:828px"></div>
<div class="gv" style="left:913px"></div>
<div class="gv" style="left:1034px"></div>
<div class="cf" style="left:25px;top:186px;width:82px;height:21px;background:#FFFF00"></div>
<div class="ct lc" style="left:27.5px;top:186px">InvoiceNo</div>
<div class="cf" style="left:106px;top:186px;width:88px;height:21px;background:#FFFF00"></div>
<div class="ct lc" style="left:108.5px;top:186px">StockCode</div>
<div class="cf" style="left:193px;top:186px;width:341px;height:21px;background:#FFFF00"></div>
<div class="ct lc" style="left:195.5px;top:186px">Description</div>
<div class="cf" style="left:533px;top:186px;width:65px;height:21px;background:#FFFF00"></div>
<div class="ct lc" style="left:535.5px;top:186px">Quantity</div>
<div class="cf" style="left:597px;top:186px;width:154px;height:21px;background:#FFFF00"></div>
<div class="ct lc" style="left:599.5px;top:186px">InvoiceDate</div>
<div class="cf" style="left:750px;top:186px;width:79px;height:21px;background:#FFFF00"></div>
<div class="ct lc" style="left:752.5px;top:186px">UnitPrice</div>
<div class="cf" style="left:828px;top:186px;width:86px;height:21px;background:#FFFF00"></div>
<div class="ct lc" style="left:830.5px;top:186px">CustomerID</div>
<div class="cf" style="left:913px;top:186px;width:121px;height:21px;background:#FFFF00"></div>
<div class="ct c lc" style="left:914px;width:120px;top:186px">Country</div>
<div class="cf" style="left:25px;top:206px;width:82px;height:22px;background:#F9716E"></div>
<div class="ct r n" style="right:933px;top:207px">536365</div>
<div class="ct r" style="right:846px;top:207px">85123A</div>
<div class="ct" style="left:195.5px;top:207px;letter-spacing:-0.268px">WHITE HANGING HEART T-LIGHT HOLDER</div>
<div class="cf" style="left:533px;top:206px;width:65px;height:22px;background:#DCE083"></div>
<div class="ct r n" style="right:442px;top:207px">6</div>
<div class="cf" style="left:597px;top:206px;width:154px;height:22px;background:#FEE483"></div>
<div class="ct r dt" style="right:289px;top:207px">12/1/2010 8:26</div>
<div class="cf" style="left:750px;top:206px;width:79px;height:22px;background:#DCE083"></div>
<div class="ct r n" style="right:211px;top:207px">2.55</div>
<div class="cf" style="left:828px;top:206px;width:86px;height:22px;background:#FBE482"></div>
<div class="ct r n" style="right:126px;top:207px">17850</div>
<div class="ct lc" style="left:915.5px;top:207px">United Kingdom</div>
<div class="cf" style="left:25px;top:227px;width:82px;height:22px;background:#F9716E"></div>
<div class="ct r n" style="right:933px;top:228px">536365</div>
<div class="cf" style="left:106px;top:227px;width:88px;height:22px;background:#FED981"></div>
<div class="ct r n" style="right:846px;top:228px">71053</div>
<div class="ct" style="left:195.5px;top:228px;letter-spacing:-0.259px">WHITE METAL LANTERN</div>
<div class="cf" style="left:533px;top:227px;width:65px;height:22px;background:#DCE083"></div>
<div class="ct r n" style="right:442px;top:228px">6</div>
<div class="cf" style="left:597px;top:227px;width:154px;height:22px;background:#FEE483"></div>
<div class="ct r dt" style="right:289px;top:228px">12/1/2010 8:26</div>
<div class="cf" style="left:750px;top:227px;width:79px;height:22px;background:#DCE083"></div>
<div class="ct r n" style="right:211px;top:228px">3.39</div>
<div class="cf" style="left:828px;top:227px;width:86px;height:22px;background:#FBE482"></div>
<div class="ct r n" style="right:126px;top:228px">17850</div>
<div class="ct lc" style="left:915.5px;top:228px">United Kingdom</div>
<div class="cf" style="left:25px;top:248px;width:82px;height:22px;background:#F9716E"></div>
<div class="ct r n" style="right:933px;top:249px">536365</div>
<div class="ct r" style="right:846px;top:249px">84406B</div>
<div class="ct" style="left:195.5px;top:249px;letter-spacing:-0.161px">CREAM CUPID HEARTS COAT HANGER</div>
<div class="cf" style="left:533px;top:248px;width:65px;height:22px;background:#DCE083"></div>
<div class="ct r n" style="right:442px;top:249px">8</div>
<div class="cf" style="left:597px;top:248px;width:154px;height:22px;background:#FEE483"></div>
<div class="ct r dt" style="right:289px;top:249px">12/1/2010 8:26</div>
<div class="cf" style="left:750px;top:248px;width:79px;height:22px;background:#DCE083"></div>
<div class="ct r n" style="right:211px;top:249px">2.75</div>
<div class="cf" style="left:828px;top:248px;width:86px;height:22px;background:#FBE482"></div>
<div class="ct r n" style="right:126px;top:249px">17850</div>
<div class="ct lc" style="left:915.5px;top:249px">United Kingdom</div>
<div class="cf" style="left:25px;top:269px;width:82px;height:22px;background:#F9716E"></div>
<div class="ct r n" style="right:933px;top:270px">536365</div>
<div class="ct r" style="right:846px;top:270px">84029G</div>
<div class="ct" style="left:195.5px;top:270px;letter-spacing:-0.155px">KNITTED UNION FLAG HOT WATER BOTTLE</div>
<div class="cf" style="left:533px;top:269px;width:65px;height:22px;background:#DCE083"></div>
<div class="ct r n" style="right:442px;top:270px">6</div>
<div class="cf" style="left:597px;top:269px;width:154px;height:22px;background:#FEE483"></div>
<div class="ct r dt" style="right:289px;top:270px">12/1/2010 8:26</div>
<div class="cf" style="left:750px;top:269px;width:79px;height:22px;background:#DCE083"></div>
<div class="ct r n" style="right:211px;top:270px">3.39</div>
<div class="cf" style="left:828px;top:269px;width:86px;height:22px;background:#FBE482"></div>
<div class="ct r n" style="right:126px;top:270px">17850</div>
<div class="ct lc" style="left:915.5px;top:270px">United Kingdom</div>
<div class="cf" style="left:25px;top:290px;width:82px;height:22px;background:#F9716E"></div>
<div class="ct r n" style="right:933px;top:291px">536365</div>
<div class="ct r" style="right:846px;top:291px">84029E</div>
<div class="ct" style="left:195.5px;top:291px;letter-spacing:-0.168px">RED WOOLLY HOTTIE WHITE HEART.</div>
<div class="cf" style="left:533px;top:290px;width:65px;height:22px;background:#DCE083"></div>
<div class="ct r n" style="right:442px;top:291px">6</div>
<div class="cf" style="left:597px;top:290px;width:154px;height:22px;background:#FEE483"></div>
<div class="ct r dt" style="right:289px;top:291px">12/1/2010 8:26</div>
<div class="cf" style="left:750px;top:290px;width:79px;height:22px;background:#DCE083"></div>
<div class="ct r n" style="right:211px;top:291px">3.39</div>
<div class="cf" style="left:828px;top:290px;width:86px;height:22px;background:#FBE482"></div>
<div class="ct r n" style="right:126px;top:291px">17850</div>
<div class="ct lc" style="left:915.5px;top:291px">United Kingdom</div>
<div class="cf" style="left:25px;top:311px;width:82px;height:22px;background:#F9716E"></div>
<div class="ct r n" style="right:933px;top:312px">536365</div>
<div class="cf" style="left:106px;top:311px;width:88px;height:22px;background:#FEE883"></div>
<div class="ct r n" style="right:846px;top:312px">22752</div>
<div class="ct" style="left:195.5px;top:312px;letter-spacing:-0.176px">SET 7 BABUSHKA NESTING BOXES</div>
<div class="cf" style="left:533px;top:311px;width:65px;height:22px;background:#DCE083"></div>
<div class="ct r n" style="right:442px;top:312px">2</div>
<div class="cf" style="left:597px;top:311px;width:154px;height:22px;background:#FEE483"></div>
<div class="ct r dt" style="right:289px;top:312px">12/1/2010 8:26</div>
<div class="cf" style="left:750px;top:311px;width:79px;height:22px;background:#DCE083"></div>
<div class="ct r n" style="right:211px;top:312px">7.65</div>
<div class="cf" style="left:828px;top:311px;width:86px;height:22px;background:#FBE482"></div>
<div class="ct r n" style="right:126px;top:312px">17850</div>
<div class="ct lc" style="left:915.5px;top:312px">United Kingdom</div>
<div class="cf" style="left:25px;top:332px;width:82px;height:22px;background:#F9716E"></div>
<div class="ct r n" style="right:933px;top:333px">536365</div>
<div class="cf" style="left:106px;top:332px;width:88px;height:22px;background:#FEE883"></div>
<div class="ct r n" style="right:846px;top:333px">21730</div>
<div class="ct" style="left:195.5px;top:333px;letter-spacing:-0.242px">GLASS STAR FROSTED T-LIGHT HOLDER</div>
<div class="cf" style="left:533px;top:332px;width:65px;height:22px;background:#DCE083"></div>
<div class="ct r n" style="right:442px;top:333px">6</div>
<div class="cf" style="left:597px;top:332px;width:154px;height:22px;background:#FEE483"></div>
<div class="ct r dt" style="right:289px;top:333px">12/1/2010 8:26</div>
<div class="cf" style="left:750px;top:332px;width:79px;height:22px;background:#DCE083"></div>
<div class="ct r n" style="right:211px;top:333px">4.25</div>
<div class="cf" style="left:828px;top:332px;width:86px;height:22px;background:#FBE482"></div>
<div class="ct r n" style="right:126px;top:333px">17850</div>
<div class="ct lc" style="left:915.5px;top:333px">United Kingdom</div>
<div class="cf" style="left:25px;top:353px;width:82px;height:22px;background:#F9716E"></div>
<div class="ct r n" style="right:933px;top:354px">536366</div>
<div class="cf" style="left:106px;top:353px;width:88px;height:22px;background:#FEE883"></div>
<div class="ct r n" style="right:846px;top:354px">22633</div>
<div class="ct" style="left:195.5px;top:354px;letter-spacing:-0.020px">HAND WARMER UNION JACK</div>
<div class="cf" style="left:533px;top:353px;width:65px;height:22px;background:#DCE083"></div>
<div class="ct r n" style="right:442px;top:354px">6</div>
<div class="cf" style="left:597px;top:353px;width:154px;height:22px;background:#FEE483"></div>
<div class="ct r dt" style="right:289px;top:354px">12/1/2010 8:28</div>
<div class="cf" style="left:750px;top:353px;width:79px;height:22px;background:#DCE083"></div>
<div class="ct r n" style="right:211px;top:354px">1.85</div>
<div class="cf" style="left:828px;top:353px;width:86px;height:22px;background:#FBE482"></div>
<div class="ct r n" style="right:126px;top:354px">17850</div>
<div class="ct lc" style="left:915.5px;top:354px">United Kingdom</div>
<div class="cf" style="left:25px;top:374px;width:82px;height:22px;background:#F9716E"></div>
<div class="ct r n" style="right:933px;top:375px">536366</div>
<div class="cf" style="left:106px;top:374px;width:88px;height:22px;background:#FEE883"></div>
<div class="ct r n" style="right:846px;top:375px">22632</div>
<div class="ct" style="left:195.5px;top:375px;letter-spacing:-0.158px">HAND WARMER RED POLKA DOT</div>
<div class="cf" style="left:533px;top:374px;width:65px;height:22px;background:#DCE083"></div>
<div class="ct r n" style="right:442px;top:375px">6</div>
<div class="cf" style="left:597px;top:374px;width:154px;height:22px;background:#FEE483"></div>
<div class="ct r dt" style="right:289px;top:375px">12/1/2010 8:28</div>
<div class="cf" style="left:750px;top:374px;width:79px;height:22px;background:#DCE083"></div>
<div class="ct r n" style="right:211px;top:375px">1.85</div>
<div class="cf" style="left:828px;top:374px;width:86px;height:22px;background:#FBE482"></div>
<div class="ct r n" style="right:126px;top:375px">17850</div>
<div class="ct lc" style="left:915.5px;top:375px">United Kingdom</div>
<div class="cf" style="left:25px;top:395px;width:82px;height:22px;background:#F9716E"></div>
<div class="ct r n" style="right:933px;top:396px">536367</div>
<div class="cf" style="left:106px;top:395px;width:88px;height:22px;background:#FED981"></div>
<div class="ct r n" style="right:846px;top:396px">84879</div>
<div class="ct" style="left:195.5px;top:396px;letter-spacing:-0.206px">ASSORTED COLOUR BIRD ORNAMENT</div>
<div class="cf" style="left:533px;top:395px;width:65px;height:22px;background:#DCE083"></div>
<div class="ct r n" style="right:442px;top:396px">32</div>
<div class="cf" style="left:597px;top:395px;width:154px;height:22px;background:#FEE483"></div>
<div class="ct r dt" style="right:289px;top:396px">12/1/2010 8:34</div>
<div class="cf" style="left:750px;top:395px;width:79px;height:22px;background:#DCE083"></div>
<div class="ct r n" style="right:211px;top:396px">1.69</div>
<div class="cf" style="left:828px;top:395px;width:86px;height:22px;background:#F5E683"></div>
<div class="ct r n" style="right:126px;top:396px">13047</div>
<div class="ct lc" style="left:915.5px;top:396px">United Kingdom</div>
<div class="cf" style="left:25px;top:416px;width:82px;height:22px;background:#F9716E"></div>
<div class="ct r n" style="right:933px;top:417px">536367</div>
<div class="cf" style="left:106px;top:416px;width:88px;height:22px;background:#FEE883"></div>
<div class="ct r n" style="right:846px;top:417px">22745</div>
<div class="ct" style="left:195.5px;top:417px;letter-spacing:-0.066px">POPPY&#x27;S PLAYHOUSE BEDROOM</div>
<div class="cf" style="left:533px;top:416px;width:65px;height:22px;background:#DCE083"></div>
<div class="ct r n" style="right:442px;top:417px">6</div>
<div class="cf" style="left:597px;top:416px;width:154px;height:22px;background:#FEE483"></div>
<div class="ct r dt" style="right:289px;top:417px">12/1/2010 8:34</div>
<div class="cf" style="left:750px;top:416px;width:79px;height:22px;background:#DCE083"></div>
<div class="ct r n" style="right:211px;top:417px">2.1</div>
<div class="cf" style="left:828px;top:416px;width:86px;height:22px;background:#F5E683"></div>
<div class="ct r n" style="right:126px;top:417px">13047</div>
<div class="ct lc" style="left:915.5px;top:417px">United Kingdom</div>
<div class="cf" style="left:25px;top:437px;width:82px;height:22px;background:#F9716E"></div>
<div class="ct r n" style="right:933px;top:438px">536367</div>
<div class="cf" style="left:106px;top:437px;width:88px;height:22px;background:#FEE883"></div>
<div class="ct r n" style="right:846px;top:438px">22748</div>
<div class="ct" style="left:195.5px;top:438px;letter-spacing:-0.016px">POPPY&#x27;S PLAYHOUSE KITCHEN</div>
<div class="cf" style="left:533px;top:437px;width:65px;height:22px;background:#DCE083"></div>
<div class="ct r n" style="right:442px;top:438px">6</div>
<div class="cf" style="left:597px;top:437px;width:154px;height:22px;background:#FEE483"></div>
<div class="ct r dt" style="right:289px;top:438px">12/1/2010 8:34</div>
<div class="cf" style="left:750px;top:437px;width:79px;height:22px;background:#DCE083"></div>
<div class="ct r n" style="right:211px;top:438px">2.1</div>
<div class="cf" style="left:828px;top:437px;width:86px;height:22px;background:#F5E683"></div>
<div class="ct r n" style="right:126px;top:438px">13047</div>
<div class="ct lc" style="left:915.5px;top:438px">United Kingdom</div>
<div class="cf" style="left:25px;top:458px;width:82px;height:22px;background:#F9716E"></div>
<div class="ct r n" style="right:933px;top:459px">536367</div>
<div class="cf" style="left:106px;top:458px;width:88px;height:22px;background:#FEE883"></div>
<div class="ct r n" style="right:846px;top:459px">22749</div>
<div class="ct" style="left:195.5px;top:459px;letter-spacing:-0.207px">FELTCRAFT PRINCESS CHARLOTTE DOLL</div>
<div class="cf" style="left:533px;top:458px;width:65px;height:22px;background:#DCE083"></div>
<div class="ct r n" style="right:442px;top:459px">8</div>
<div class="cf" style="left:597px;top:458px;width:154px;height:22px;background:#FEE483"></div>
<div class="ct r dt" style="right:289px;top:459px">12/1/2010 8:34</div>
<div class="cf" style="left:750px;top:458px;width:79px;height:22px;background:#DCE083"></div>
<div class="ct r n" style="right:211px;top:459px">3.75</div>
<div class="cf" style="left:828px;top:458px;width:86px;height:22px;background:#F5E683"></div>
<div class="ct r n" style="right:126px;top:459px">13047</div>
<div class="ct lc" style="left:915.5px;top:459px">United Kingdom</div>
<div class="cf" style="left:25px;top:479px;width:82px;height:22px;background:#F9716E"></div>
<div class="ct r n" style="right:933px;top:480px">536367</div>
<div class="cf" style="left:106px;top:479px;width:88px;height:22px;background:#FEE883"></div>
<div class="ct r n" style="right:846px;top:480px">22310</div>
<div class="ct" style="left:195.5px;top:480px;letter-spacing:-0.110px">IVORY KNITTED MUG COSY</div>
<div class="cf" style="left:533px;top:479px;width:65px;height:22px;background:#DCE083"></div>
<div class="ct r n" style="right:442px;top:480px">6</div>
<div class="cf" style="left:597px;top:479px;width:154px;height:22px;background:#FEE483"></div>
<div class="ct r dt" style="right:289px;top:480px">12/1/2010 8:34</div>
<div class="cf" style="left:750px;top:479px;width:79px;height:22px;background:#DCE083"></div>
<div class="ct r n" style="right:211px;top:480px">1.65</div>
<div class="cf" style="left:828px;top:479px;width:86px;height:22px;background:#F5E683"></div>
<div class="ct r n" style="right:126px;top:480px">13047</div>
<div class="ct lc" style="left:915.5px;top:480px">United Kingdom</div>
<div class="cf" style="left:25px;top:500px;width:82px;height:22px;background:#F9716E"></div>
<div class="ct r n" style="right:933px;top:501px">536367</div>
<div class="cf" style="left:106px;top:500px;width:88px;height:22px;background:#FED981"></div>
<div class="ct r n" style="right:846px;top:501px">84969</div>
<div class="ct" style="left:195.5px;top:501px;letter-spacing:-0.005px">BOX OF 6 ASSORTED COLOUR TEASPOONS</div>
<div class="cf" style="left:533px;top:500px;width:65px;height:22px;background:#DCE083"></div>
<div class="ct r n" style="right:442px;top:501px">6</div>
<div class="cf" style="left:597px;top:500px;width:154px;height:22px;background:#FEE483"></div>
<div class="ct r dt" style="right:289px;top:501px">12/1/2010 8:34</div>
<div class="cf" style="left:750px;top:500px;width:79px;height:22px;background:#DCE083"></div>
<div class="ct r n" style="right:211px;top:501px">4.25</div>
<div class="cf" style="left:828px;top:500px;width:86px;height:22px;background:#F5E683"></div>
<div class="ct r n" style="right:126px;top:501px">13047</div>
<div class="ct lc" style="left:915.5px;top:501px">United Kingdom</div>
<div class="cf" style="left:25px;top:521px;width:82px;height:22px;background:#F9716E"></div>
<div class="ct r n" style="right:933px;top:522px">536367</div>
<div class="cf" style="left:106px;top:521px;width:88px;height:22px;background:#FEE883"></div>
<div class="ct r n" style="right:846px;top:522px">22623</div>
<div class="ct" style="left:195.5px;top:522px;letter-spacing:-0.031px">BOX OF VINTAGE JIGSAW BLOCKS</div>
<div class="cf" style="left:533px;top:521px;width:65px;height:22px;background:#DCE083"></div>
<div class="ct r n" style="right:442px;top:522px">3</div>
<div class="cf" style="left:597px;top:521px;width:154px;height:22px;background:#FEE483"></div>
<div class="ct r dt" style="right:289px;top:522px">12/1/2010 8:34</div>
<div class="cf" style="left:750px;top:521px;width:79px;height:22px;background:#DCE083"></div>
<div class="ct r n" style="right:211px;top:522px">4.95</div>
<div class="cf" style="left:828px;top:521px;width:86px;height:22px;background:#F5E683"></div>
<div class="ct r n" style="right:126px;top:522px">13047</div>
<div class="ct lc" style="left:915.5px;top:522px">United Kingdom</div>
<div class="cf" style="left:25px;top:542px;width:82px;height:22px;background:#F9716E"></div>
<div class="ct r n" style="right:933px;top:543px">536367</div>
<div class="cf" style="left:106px;top:542px;width:88px;height:22px;background:#FEE883"></div>
<div class="ct r n" style="right:846px;top:543px">22622</div>
<div class="ct" style="left:195.5px;top:543px;letter-spacing:-0.120px">BOX OF VINTAGE ALPHABET BLOCKS</div>
<div class="cf" style="left:533px;top:542px;width:65px;height:22px;background:#DCE083"></div>
<div class="ct r n" style="right:442px;top:543px">2</div>
<div class="cf" style="left:597px;top:542px;width:154px;height:22px;background:#FEE483"></div>
<div class="ct r dt" style="right:289px;top:543px">12/1/2010 8:34</div>
<div class="cf" style="left:750px;top:542px;width:79px;height:22px;background:#DCE083"></div>
<div class="ct r n" style="right:211px;top:543px">9.95</div>
<div class="cf" style="left:828px;top:542px;width:86px;height:22px;background:#F5E683"></div>
<div class="ct r n" style="right:126px;top:543px">13047</div>
<div class="ct lc" style="left:915.5px;top:543px">United Kingdom</div>
<div class="cf" style="left:25px;top:563px;width:82px;height:22px;background:#F9716E"></div>
<div class="ct r n" style="right:933px;top:564px">536367</div>
<div class="cf" style="left:106px;top:563px;width:88px;height:22px;background:#FEE883"></div>
<div class="ct r n" style="right:846px;top:564px">21754</div>
<div class="ct" style="left:195.5px;top:564px;letter-spacing:-0.163px">HOME BUILDING BLOCK WORD</div>
<div class="cf" style="left:533px;top:563px;width:65px;height:22px;background:#DCE083"></div>
<div class="ct r n" style="right:442px;top:564px">3</div>
<div class="cf" style="left:597px;top:563px;width:154px;height:22px;background:#FEE483"></div>
<div class="ct r dt" style="right:289px;top:564px">12/1/2010 8:34</div>
<div class="cf" style="left:750px;top:563px;width:79px;height:22px;background:#DCE083"></div>
<div class="ct r n" style="right:211px;top:564px">5.95</div>
<div class="cf" style="left:828px;top:563px;width:86px;height:22px;background:#F5E683"></div>
<div class="ct r n" style="right:126px;top:564px">13047</div>
<div class="ct lc" style="left:915.5px;top:564px">United Kingdom</div>
<div class="cf" style="left:25px;top:584px;width:82px;height:22px;background:#F9716E"></div>
<div class="ct r n" style="right:933px;top:585px">536367</div>
<div class="cf" style="left:106px;top:584px;width:88px;height:22px;background:#FEE883"></div>
<div class="ct r n" style="right:846px;top:585px">21755</div>
<div class="ct" style="left:195.5px;top:585px;letter-spacing:-0.216px">LOVE BUILDING BLOCK WORD</div>
<div class="cf" style="left:533px;top:584px;width:65px;height:22px;background:#DCE083"></div>
<div class="ct r n" style="right:442px;top:585px">3</div>
<div class="cf" style="left:597px;top:584px;width:154px;height:22px;background:#FEE483"></div>
<div class="ct r dt" style="right:289px;top:585px">12/1/2010 8:34</div>
<div class="cf" style="left:750px;top:584px;width:79px;height:22px;background:#DCE083"></div>
<div class="ct r n" style="right:211px;top:585px">5.95</div>
<div class="cf" style="left:828px;top:584px;width:86px;height:22px;background:#F5E683"></div>
<div class="ct r n" style="right:126px;top:585px">13047</div>
<div class="ct lc" style="left:915.5px;top:585px">United Kingdom</div>
<div class="cf" style="left:25px;top:605px;width:82px;height:22px;background:#F9716E"></div>
<div class="ct r n" style="right:933px;top:606px">536367</div>
<div class="cf" style="left:106px;top:605px;width:88px;height:22px;background:#FEE883"></div>
<div class="ct r n" style="right:846px;top:606px">21777</div>
<div class="ct" style="left:195.5px;top:606px;letter-spacing:-0.293px">RECIPE BOX WITH METAL HEART</div>
<div class="cf" style="left:533px;top:605px;width:65px;height:22px;background:#DCE083"></div>
<div class="ct r n" style="right:442px;top:606px">4</div>
<div class="cf" style="left:597px;top:605px;width:154px;height:22px;background:#FEE483"></div>
<div class="ct r dt" style="right:289px;top:606px">12/1/2010 8:34</div>
<div class="cf" style="left:750px;top:605px;width:79px;height:22px;background:#DCE083"></div>
<div class="ct r n" style="right:211px;top:606px">7.95</div>
<div class="cf" style="left:828px;top:605px;width:86px;height:22px;background:#F5E683"></div>
<div class="ct r n" style="right:126px;top:606px">13047</div>
<div class="ct lc" style="left:915.5px;top:606px">United Kingdom</div>
<div class="cf" style="left:25px;top:626px;width:82px;height:22px;background:#F9716E"></div>
<div class="ct r n" style="right:933px;top:627px">536367</div>
<div class="cf" style="left:106px;top:626px;width:88px;height:22px;background:#FEE583"></div>
<div class="ct r n" style="right:846px;top:627px">48187</div>
<div class="ct" style="left:195.5px;top:627px;letter-spacing:-0.042px">DOORMAT NEW ENGLAND</div>
<div class="cf" style="left:533px;top:626px;width:65px;height:22px;background:#DCE083"></div>
<div class="ct r n" style="right:442px;top:627px">4</div>
<div class="cf" style="left:597px;top:626px;width:154px;height:22px;background:#FEE483"></div>
<div class="ct r dt" style="right:289px;top:627px">12/1/2010 8:34</div>
<div class="cf" style="left:750px;top:626px;width:79px;height:22px;background:#DCE083"></div>
<div class="ct r n" style="right:211px;top:627px">7.95</div>
<div class="cf" style="left:828px;top:626px;width:86px;height:22px;background:#F5E683"></div>
<div class="ct r n" style="right:126px;top:627px">13047</div>
<div class="ct lc" style="left:915.5px;top:627px">United Kingdom</div>
<div class="cf" style="left:25px;top:647px;width:82px;height:22px;background:#F9716E"></div>
<div class="ct r n" style="right:933px;top:648px">536368</div>
<div class="cf" style="left:106px;top:647px;width:88px;height:22px;background:#FEE883"></div>
<div class="ct r n" style="right:846px;top:648px">22960</div>
<div class="ct" style="left:195.5px;top:648px;letter-spacing:-0.172px">JAM MAKING SET WITH JARS</div>
<div class="cf" style="left:533px;top:647px;width:65px;height:22px;background:#DCE083"></div>
<div class="ct r n" style="right:442px;top:648px">6</div>
<div class="cf" style="left:597px;top:647px;width:154px;height:22px;background:#FEE483"></div>
<div class="ct r dt" style="right:289px;top:648px">12/1/2010 8:34</div>
<div class="cf" style="left:750px;top:647px;width:79px;height:22px;background:#DCE083"></div>
<div class="ct r n" style="right:211px;top:648px">4.25</div>
<div class="cf" style="left:828px;top:647px;width:86px;height:22px;background:#F5E683"></div>
<div class="ct r n" style="right:126px;top:648px">13047</div>
<div class="ct lc" style="left:915.5px;top:648px">United Kingdom</div>
<div class="cf" style="left:25px;top:668px;width:82px;height:22px;background:#F9716E"></div>
<div class="ct r n" style="right:933px;top:669px">536368</div>
<div class="cf" style="left:106px;top:668px;width:88px;height:22px;background:#FEE883"></div>
<div class="ct r n" style="right:846px;top:669px">22913</div>
<div class="ct" style="left:195.5px;top:669px;letter-spacing:0.072px">RED COAT RACK PARIS FASHION</div>
<div class="cf" style="left:533px;top:668px;width:65px;height:22px;background:#DCE083"></div>
<div class="ct r n" style="right:442px;top:669px">3</div>
<div class="cf" style="left:597px;top:668px;width:154px;height:22px;background:#FEE483"></div>
<div class="ct r dt" style="right:289px;top:669px">12/1/2010 8:34</div>
<div class="cf" style="left:750px;top:668px;width:79px;height:22px;background:#DCE083"></div>
<div class="ct r n" style="right:211px;top:669px">4.95</div>
<div class="cf" style="left:828px;top:668px;width:86px;height:22px;background:#F5E683"></div>
<div class="ct r n" style="right:126px;top:669px">13047</div>
<div class="ct lc" style="left:915.5px;top:669px">United Kingdom</div>
<div class="rh" style="top:186px;height:21px">1</div>
<div class="rh" style="top:207px;height:21px">2</div>
<div class="rh" style="top:228px;height:21px">3</div>
<div class="rh" style="top:249px;height:21px">4</div>
<div class="rh" style="top:270px;height:21px">5</div>
<div class="rh" style="top:291px;height:21px">6</div>
<div class="rh" style="top:312px;height:21px">7</div>
<div class="rh" style="top:333px;height:21px">8</div>
<div class="rh" style="top:354px;height:21px">9</div>
<div class="rh" style="top:375px;height:21px">10</div>
<div class="rh" style="top:396px;height:21px">11</div>
<div class="rh" style="top:417px;height:21px">12</div>
<div class="rh" style="top:438px;height:21px">13</div>
<div class="rh" style="top:459px;height:21px">14</div>
<div class="rh" style="top:480px;height:21px">15</div>
<div class="rh" style="top:501px;height:21px">16</div>
<div class="rh" style="top:522px;height:21px">17</div>
<div class="rh" style="top:543px;height:21px">18</div>
<div class="rh" style="top:564px;height:21px">19</div>
<div class="rh" style="top:585px;height:21px">20</div>
<div class="rh" style="top:606px;height:21px">21</div>
<div class="rh" style="top:627px;height:21px">22</div>
<div class="rh" style="top:648px;height:21px">23</div>
<div class="rh" style="top:669px;height:21px">24</div>
<div class="ch" style="left:26px;width:81px">A</div>
<div class="ch" style="left:107px;width:87px">B</div>
<div class="ch" style="left:194px;width:340px">C</div>
<div class="ch" style="left:534px;width:64px">D</div>
<div class="ch" style="left:598px;width:153px">E</div>
<div class="ch" style="left:751px;width:78px">F</div>
<div class="ch" style="left:829px;width:85px">G</div>
<div class="ch" style="left:914px;width:121px">H</div>
<div class="a" style="left:1034px;top:166px;width:3px;height:19px;background:linear-gradient(#fbe3bd,#f8cf95);border-left:1px solid #f0a45a"></div>

<svg class="a" style="left:0;top:688px" width="1037" height="31" viewBox="0 688 1037 31">
<defs>
<linearGradient id="tbg" x1="0" y1="0" x2="0" y2="1"><stop offset="0" stop-color="#9cb4d8"/><stop offset="1" stop-color="#afc5e4"/></linearGradient>
<linearGradient id="navg" x1="0" y1="0" x2="0" y2="1"><stop offset="0" stop-color="#e3ecf8"/><stop offset="0.5" stop-color="#d3e1f2"/><stop offset="1" stop-color="#c4d6ee"/></linearGradient>
<linearGradient id="tabw" x1="0" y1="0" x2="0" y2="1"><stop offset="0" stop-color="#ffffff"/><stop offset="0.6" stop-color="#f4f7fb"/><stop offset="1" stop-color="#dfe8f4"/></linearGradient>
<linearGradient id="tabi" x1="0" y1="0" x2="0" y2="1"><stop offset="0" stop-color="#dfe9f6"/><stop offset="1" stop-color="#c3d5ee"/></linearGradient>
<linearGradient id="stg" x1="0" y1="0" x2="0" y2="1"><stop offset="0" stop-color="#dae7f8"/><stop offset="0.45" stop-color="#d0e0f5"/><stop offset="0.5" stop-color="#c0d6f2"/><stop offset="1" stop-color="#b9d1f0"/></linearGradient>
<linearGradient id="scg" x1="0" y1="0" x2="0" y2="1"><stop offset="0" stop-color="#f0f1f4"/><stop offset="0.45" stop-color="#e2e6ec"/><stop offset="0.55" stop-color="#c9d3e0"/><stop offset="0.9" stop-color="#b3c1d4"/><stop offset="1" stop-color="#c4ccd8"/></linearGradient>
</defs>
<rect x="0" y="689" width="1037" height="15" fill="url(#tbg)"/>
<rect x="0" y="689" width="1037" height="1" fill="#7f9dc9"/>
<rect x="0" y="689" width="63" height="15" fill="url(#navg)"/>
<rect x="62" y="689" width="1" height="15" fill="#9ab0cf"/>
<g fill="#1c3f91">
<rect x="6" y="692" width="1.5" height="7"/><path d="M8,695.5 L12,692 V699 Z"/>
<path d="M22,695.5 L26,692 V699 Z"/>
<path d="M40,695.5 L36,692 V699 Z"/>
<path d="M53,695.5 L49,692 V699 Z"/><rect x="54" y="692" width="1.5" height="7"/>
</g>
<path d="M107.5,704 L118,689.5 H148 L137,704 Z" fill="url(#tabi)" stroke="#8aa4ca" stroke-width="1"/>
<path d="M63.5,704 V689 H116 L104,704 Z" fill="url(#tabw)" stroke="#9ab0cf" stroke-width="1"/>
<rect x="64" y="689" width="50" height="1.5" fill="#ffffff"/>
<text x="72" y="701" font-family="Liberation Sans" font-weight="bold" font-size="13" fill="#15428b">data</text>
<!-- insert sheet icon -->
<path d="M122.5,696.5 H131 Q132.5,696.5 132.5,698 V701 Q132.5,702.5 131,702.5 H124 Q122.5,702.5 122.5,701 Z" fill="#eef2f7" stroke="#4c5563" stroke-width="0.9"/>
<g stroke="#f0a020" stroke-width="1.1"><path d="M121.5,691v6M118.5,694h6M119.3,691.8l4.4,4.4M123.7,691.8l-4.4,4.4"/></g>
<circle cx="121.5" cy="694" r="1.2" fill="#ffd24a"/>
<rect x="0" y="704" width="1037" height="1" fill="#5b7db0"/>
<!-- scrollbar area -->
<rect x="818" y="690" width="18" height="14" fill="#7a9cc8"/>
<rect x="810.5" y="690.5" width="7" height="13" fill="#ffffff" stroke="#6f8fbf" stroke-width="1"/>
<rect x="813" y="693" width="1.2" height="8" fill="#5f7fae"/>
<path d="M823,696.5 L828,691.8 V701 Z" fill="#3a4a6a"/>
<rect x="835.5" y="689.5" width="210" height="14.5" fill="url(#scg)" stroke="#4e6e9e" stroke-width="1"/>
<rect x="836" y="690" width="210" height="1" fill="#ffffff" opacity="0.8"/>
<rect x="1035" y="694" width="1.2" height="7.5" fill="#6a6e78"/>
<!-- status bar -->
<rect x="0" y="705" width="1037" height="14" fill="url(#stg)"/>
<rect x="0" y="705" width="1037" height="1" fill="#ffffff"/>
<rect x="46" y="706" width="1" height="13" fill="#9fb5d3"/>
</svg>
<div class="a" style="left:7px;top:710px;font-size:11.5px;color:#15428b">Ready</div>
</body></html>
